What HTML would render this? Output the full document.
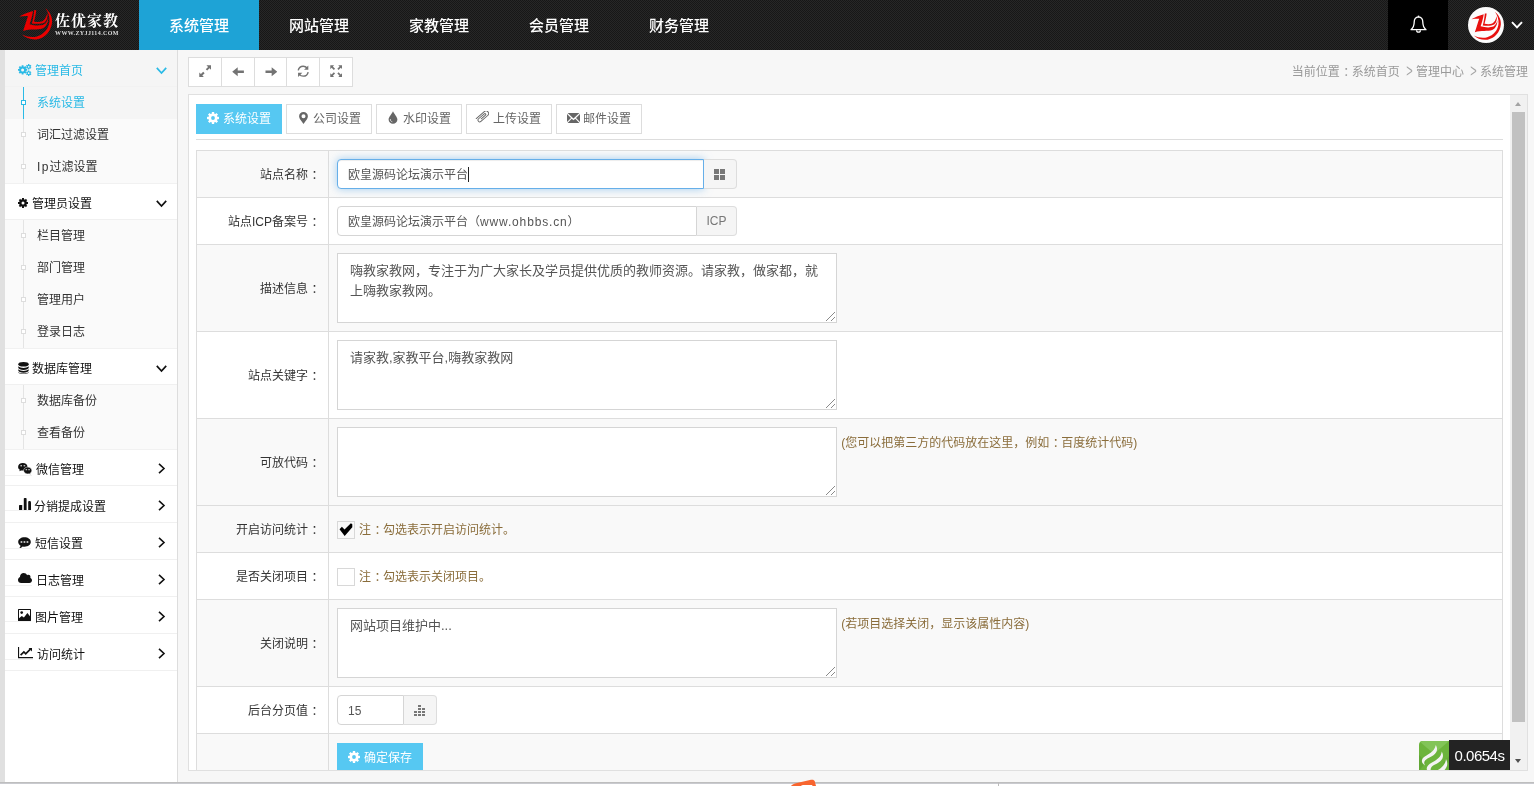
<!DOCTYPE html>
<html lang="zh-CN">
<head>
<meta charset="utf-8">
<title>佐优家教 - 系统管理</title>
<style>
*,*:before,*:after{box-sizing:border-box;margin:0;padding:0}
html,body{width:1534px;height:786px;overflow:hidden;background:#fff}
body{font-family:"Liberation Sans","Noto Sans CJK SC",sans-serif;font-size:12px;color:#333;position:relative}
a{text-decoration:none;color:inherit}
ul{list-style:none}
svg{display:block}
.gt{display:inline-block;position:relative;left:2px;transform:scale(.92,1.5);transform-origin:50% 62%;font-weight:400;color:#a4a4a4}
.c{position:relative;left:3.5px}
/* header */
#hd{will-change:transform;position:absolute;left:0;top:0;width:1534px;height:50px;background:#1e1e1e conic-gradient(#272727 25%,#171717 0 50%,#272727 0 75%,#171717 0) 0 0/2px 2px}
#logo{position:absolute;left:19px;top:8px;width:104px;height:34px}
#logo svg{position:absolute;left:-4.3px;top:-4.2px}
#logo b{position:absolute;left:36px;top:3px;font-family:"Liberation Serif","Noto Serif CJK SC",serif;font-weight:700;font-size:15px;line-height:20px;color:#fff;white-space:nowrap;letter-spacing:1px}
#logo i{position:absolute;left:36px;top:22px;font-family:"Liberation Serif",serif;font-style:normal;font-weight:700;font-size:6px;line-height:7px;color:#ddd;white-space:nowrap;letter-spacing:.38px}
#nav{position:absolute;left:139px;top:0;height:50px;display:flex}
#nav a{display:block;width:120px;height:50px;line-height:52px;text-align:center;color:#fff;font-size:15px;font-weight:500}
#nav a.on{background:#1ea3d6}
#bell{position:absolute;left:1388px;top:0;width:60px;height:50px;background:#000}
#bell svg{position:absolute;left:22px;top:15px}
#avatar{position:absolute;left:1468px;top:7px;width:36px;height:36px;border-radius:50%;background:#fcfcfc;overflow:hidden}
#avatar svg{position:absolute;left:-1.500px;top:.5px}
#uchev{position:absolute;left:1511px;top:21px}
/* left strip + sidebar */
#strip{position:absolute;left:0;top:50px;width:5px;height:732px;background:#e0e0e0}
#side{will-change:transform;position:absolute;left:5px;top:50px;width:173px;height:732px;background:#fff;border-right:1px solid #ddd}
#side .h{position:relative;display:block;height:37px;line-height:43px;border-bottom:1px solid #f0f0f0;font-size:12px;color:#111;white-space:nowrap}
#side .h .ic{position:absolute;left:13px;top:14px}
#side .h .tx{position:absolute;left:30px;top:0}
#side .h .ch{position:absolute;left:150.500px;top:16.500px}
#side .h .cr{position:absolute;left:153px;top:14px}
#side .h.on{background:#f5f5f5;color:#2abae6;border-bottom-color:#f2f2f2}
#side .sub{position:relative;background:#fafafa}
#side .sub+.h{box-shadow:inset 0 1px 0 #f1f1f1}
#side .h u{position:absolute;left:0;height:1px;background:#f1f1f1}
#side .sub:before{content:"";position:absolute;left:18px;top:0;bottom:0;width:1px;background:#e4e4e4}
#side .sub li{position:relative;height:32px;line-height:33px;padding-left:32px;color:#333}
#side .sub li:before{content:"";position:absolute;left:16px;top:13px;width:5px;height:5px;border:1px solid #ddd;background:#fff}
#side .sub li.on{background:#f5f5f5;color:#2abae6}
#side .sub li.on:before{border-color:#2abae6;z-index:1}
#side .sub li.on:after{content:"";position:absolute;left:18px;top:0;bottom:0;width:1px;background:#2abae6}
/* main */
#main{will-change:transform;position:absolute;left:178px;top:50px;width:1356px;height:732px;background:#f7f7f7}
#tb{position:absolute;left:10px;top:7px;width:165px;height:30px;border:1px solid #ddd;background:#fff}
#tb i{position:absolute;top:0;width:1px;height:28px;background:#ddd}
#tb svg{position:absolute}
#bc{word-spacing:1.2px;position:absolute;right:6px;top:13px;height:18px;line-height:18px;font-size:12px;color:#999;white-space:nowrap}
#fr{position:absolute;left:10px;top:44px;width:1340px;height:677px;background:#fff;border:1px solid #e0e0e0;overflow:hidden}
/* iframe content coordinates: origin = (189,95) */
#tabs{position:absolute;left:7px;top:9px;height:30px;display:flex}
#tabs a{position:relative;display:block;height:30px;line-height:28px;border:1px solid #ddd;background:#fff;color:#666;width:86px;margin-right:4px;padding-left:26px;font-size:12px;white-space:nowrap}
#tabs a.on{background:#56c8f2;border-color:#56c8f2;color:#fff}
#tabs a svg{position:absolute}
#hr{position:absolute;left:7px;top:44px;width:1307px;height:1px;background:#ddd}
table{position:absolute;left:7px;top:55px;width:1307px;border-collapse:collapse;table-layout:fixed}
td{border:1px solid #ddd;padding:8px;vertical-align:middle;font-size:12px;line-height:18px}
tr.g td{background:#f9f9f9}
td.l{width:132px;text-align:right;padding-right:8px;padding-top:10px;color:#333;white-space:nowrap}
.ig{display:flex;height:30px}
.inp{display:block;height:30px;border:1px solid #d5d5d5;border-radius:4px 0 0 4px;background:#fff;padding:0 10px;line-height:30px;font-size:12px;color:#555;white-space:nowrap;overflow:hidden}
.inp.f{border-color:#66afe9;box-shadow:inset 0 1px 1px rgba(0,0,0,.075),0 0 8px rgba(102,175,233,.6)}
.caret{display:inline-block;width:1px;height:15px;background:#222;vertical-align:-3px}
.add{position:relative;display:block;height:30px;border:1px solid #ddd;border-left:0;border-radius:0 4px 4px 0;background:#f5f5f5;color:#777;text-align:center;line-height:28px;font-size:12px}
.add svg{position:absolute}
.ta{position:relative;display:inline-block;vertical-align:top;width:500px;height:70px;border:1px solid #d5d5d5;background:#fff;padding:7px 12px 5px;font-size:13px;line-height:20px;color:#555}
.ta:after{content:"";position:absolute;right:1px;bottom:1px;width:9px;height:9px;background:linear-gradient(135deg,transparent 0,transparent 47%,#8a8a8a 47%,#8a8a8a 54%,transparent 54%,transparent 73%,#8a8a8a 73%,#8a8a8a 80%,transparent 80%)}
.note{color:#8a6d3b;font-size:12px}
.ta+.note{position:relative;top:7px;left:1px}
.cb+.note{position:relative;top:1px}
.cb{position:relative;top:.6px;display:inline-block;vertical-align:middle;width:18px;height:18px;border:1px solid #d8d8d8;margin-right:4px}
.cb svg{position:absolute;left:1px;top:1px}
.btn{display:block;position:relative;width:86px;height:30px;background:#56c8f2;color:#fff;line-height:30px;padding-left:27px;font-size:12px}
.btn svg{position:absolute;left:11px;top:8px}
/* scrollbar */
#sb{position:absolute;right:0;top:0;width:17px;height:675px;background:#f1f1f1}
#sb i{position:absolute;left:2px;top:17px;width:13px;height:610px;background:#c1c1c1}
#sb b{position:absolute;left:5px;width:0;height:0;border:3.5px solid transparent}
#sb b.u{top:7px;border-bottom:4px solid #a3a3a3;border-top:0}
#sb b.d{bottom:7px;border-top:4px solid #505050;border-bottom:0}
#trace{position:absolute;left:1230px;top:645px;width:91px;height:30px}
#trace .g{position:absolute;left:0;top:1px;width:30px;height:29px;border-radius:4px 0 0 0;overflow:hidden}
#trace .t{position:absolute;left:30px;top:0;width:61px;height:30px;background:#232323;color:#fff;font-size:15px;line-height:31px;text-align:center;letter-spacing:-.5px}
#foot{position:absolute;left:0;top:782px;width:1534px;height:4px;background:#fff;border-top:1px solid #bebebe}
#foot:before{content:"";position:absolute;left:0;top:0;width:100%;height:1px;background:#c9cacf}
#ft1{position:absolute;left:791px;top:779px;width:26px;height:7px;overflow:hidden}
#ft2{position:absolute;left:816px;top:782px;width:183px;height:4px;border-right:1px solid #bbb;background:transparent}
</style>
</head>
<body>
<div id="hd">
  <div id="logo"><svg width="40" height="40" viewBox="0 0 786 786"><path fill="#e80000" d="M85,245 C170,200 270,160 355,138 C340,230 315,320 287,398 C380,428 500,432 565,405 C615,375 640,325 652,268 C656,360 615,445 540,482 C440,520 300,480 160,530 C190,440 225,330 255,237 C200,235 140,240 85,245Z"/><path fill="#e80000" d="M378,118 L418,122 C408,200 392,280 372,343 C430,358 495,358 540,338 C590,308 620,250 636,178 C650,240 632,318 582,362 C520,396 420,392 332,382 C356,300 370,210 378,118Z"/><path fill="#e80000" d="M598,82 C680,150 738,250 728,362 C712,522 600,662 440,692 C320,707 208,672 138,600 C230,648 340,662 430,638 C570,598 668,480 678,340 C684,250 655,160 598,82Z"/></svg><b>佐优家教</b><i>WWW.ZYJJ114.COM</i></div>
  <div id="nav"><a class="on">系统管理</a><a>网站管理</a><a>家教管理</a><a>会员管理</a><a>财务管理</a></div>
  <div id="bell"><svg width="17" height="18" viewBox="0 0 17 18"><path fill="none" stroke="#fff" stroke-width="1.3" stroke-linejoin="round" d="M8.5,1.8 C5.6,2.1 4.2,4.4 4.2,7 C4.2,10.6 3,13 1,14.7 H16 C14,13 12.8,10.6 12.8,7 C12.8,4.4 11.4,2.1 8.5,1.8Z"/><path fill="#fff" d="M7.8,0.6 H9.2 V2.2 H7.8Z"/><path fill="none" stroke="#fff" stroke-width="1.2" d="M6.6,15.2 C6.6,16.4 7.4,17.2 8.5,17.2 S10.4,16.4 10.4,15.2"/></svg></div>
  <div id="avatar"><svg width="37" height="36" viewBox="0 0 786 786"><path fill="#e8110f" d="M85,245 C170,200 270,160 355,138 C340,230 315,320 287,398 C380,428 500,432 565,405 C615,375 640,325 652,268 C656,360 615,445 540,482 C440,520 300,480 160,530 C190,440 225,330 255,237 C200,235 140,240 85,245Z"/><path fill="#e8110f" d="M378,118 L418,122 C408,200 392,280 372,343 C430,358 495,358 540,338 C590,308 620,250 636,178 C650,240 632,318 582,362 C520,396 420,392 332,382 C356,300 370,210 378,118Z"/><path fill="#e8110f" d="M598,82 C680,150 738,250 728,362 C712,522 600,662 440,692 C320,707 208,672 138,600 C230,648 340,662 430,638 C570,598 668,480 678,340 C684,250 655,160 598,82Z"/></svg></div>
  <div id="uchev"><svg width="12" height="8" viewBox="0 0 12 8"><path d="M1,1.2 L6,6.4 L11,1.2" fill="none" stroke="#fff" stroke-width="1.9"/></svg></div>
</div>
<div id="strip"></div>
<div id="side">
  <a class="h on"><span class="ic"><svg width="14" height="12" viewBox="0 0 14 12"><path fill="currentColor" fill-rule="evenodd" d="M3.76,2.40 L3.66,1.29 L5.54,1.29 L5.44,2.40 L6.48,2.83 L7.20,1.98 L8.52,3.30 L7.67,4.02 L8.10,5.06 L9.21,4.96 L9.21,6.84 L8.10,6.74 L7.67,7.78 L8.52,8.50 L7.20,9.82 L6.48,8.97 L5.44,9.40 L5.54,10.51 L3.66,10.51 L3.76,9.40 L2.72,8.97 L2.00,9.82 L0.68,8.50 L1.53,7.78 L1.10,6.74 L-0.01,6.84 L-0.01,4.96 L1.10,5.06 L1.53,4.02 L0.68,3.30 L2.00,1.98 L2.72,2.83Z M3.10,5.90 a1.50,1.50 0 1,0 3.00,0 a1.50,1.50 0 1,0 -3.00,0Z"/><path fill="currentColor" fill-rule="evenodd" d="M10.08,0.90 L9.96,0.10 L11.44,0.10 L11.32,0.90 L12.04,1.31 L12.67,0.81 L13.41,2.09 L12.66,2.38 L12.66,3.22 L13.41,3.51 L12.67,4.79 L12.04,4.29 L11.32,4.70 L11.44,5.50 L9.96,5.50 L10.08,4.70 L9.36,4.29 L8.73,4.79 L7.99,3.51 L8.74,3.22 L8.74,2.38 L7.99,2.09 L8.73,0.81 L9.36,1.31Z M9.85,2.80 a0.85,0.85 0 1,0 1.70,0 a0.85,0.85 0 1,0 -1.70,0Z"/><path fill="currentColor" fill-rule="evenodd" d="M10.08,7.30 L9.96,6.50 L11.44,6.50 L11.32,7.30 L12.04,7.71 L12.67,7.21 L13.41,8.49 L12.66,8.78 L12.66,9.62 L13.41,9.91 L12.67,11.19 L12.04,10.69 L11.32,11.10 L11.44,11.90 L9.96,11.90 L10.08,11.10 L9.36,10.69 L8.73,11.19 L7.99,9.91 L8.74,9.62 L8.74,8.78 L7.99,8.49 L8.73,7.21 L9.36,7.71Z M9.85,9.20 a0.85,0.85 0 1,0 1.70,0 a0.85,0.85 0 1,0 -1.70,0Z"/></svg></span><span class="tx" style="left:30px">管理首页</span><span class="ch"><svg width="11" height="8" viewBox="0 0 11 8"><path d="M0.800,0.900 L5.500,6 L10.200,0.900" fill="none" stroke="currentColor" stroke-width="1.700"/></svg></span></a>
  <ul class="sub"><li class="on">系统设置</li><li>词汇过滤设置</li><li><span style="letter-spacing:1.3px">Ip</span>过滤设置</li></ul>
  <a class="h"><span class="ic" style="top:15px"><svg width="10" height="10" viewBox="0 0 10 10"><path fill="currentColor" fill-rule="evenodd" d="M4.08,1.16 L3.99,0.00 L6.01,0.00 L5.92,1.16 L7.06,1.63 L7.82,0.75 L9.25,2.18 L8.37,2.94 L8.84,4.08 L10.00,3.99 L10.00,6.01 L8.84,5.92 L8.37,7.06 L9.25,7.82 L7.82,9.25 L7.06,8.37 L5.92,8.84 L6.01,10.00 L3.99,10.00 L4.08,8.84 L2.94,8.37 L2.18,9.25 L0.75,7.82 L1.63,7.06 L1.16,5.92 L0.00,6.01 L0.00,3.99 L1.16,4.08 L1.63,2.94 L0.75,2.18 L2.18,0.75 L2.94,1.63Z M3.50,5.00 a1.50,1.50 0 1,0 3.00,0 a1.50,1.50 0 1,0 -3.00,0Z"/></svg></span><span class="tx" style="left:27px">管理员设置</span><span class="ch"><svg width="11" height="8" viewBox="0 0 11 8"><path d="M0.800,0.900 L5.500,6 L10.200,0.900" fill="none" stroke="currentColor" stroke-width="1.700"/></svg></span></a>
  <ul class="sub"><li>栏目管理</li><li>部门管理</li><li>管理用户</li><li>登录日志</li></ul>
  <a class="h"><span class="ic"><svg width="11" height="12" viewBox="0 0 11 12"><g fill="currentColor"><ellipse cx="5.5" cy="2.3" rx="5.2" ry="2.3"/><path d="M0.3,4.3 C1.5,5.5 3.5,5.9 5.5,5.9 S9.5,5.5 10.7,4.3 V5.8 C10.7,7 8.4,7.9 5.5,7.9 S0.3,7 0.3,5.8Z"/><path d="M0.3,7.3 C1.5,8.5 3.5,8.9 5.5,8.9 S9.5,8.5 10.7,7.3 V8.6 C10.7,9.8 8.4,10.7 5.5,10.7 S0.3,9.8 0.3,8.6Z"/><path d="M0.3,9.9 C1.5,11 3.5,11.4 5.5,11.4 S9.5,11 10.7,9.9 V10.2 C10.7,11.3 8.4,12 5.5,12 S0.3,11.3 0.3,10.2Z"/></g></svg></span><span class="tx" style="left:27px">数据库管理</span><span class="ch"><svg width="11" height="8" viewBox="0 0 11 8"><path d="M0.800,0.900 L5.500,6 L10.200,0.900" fill="none" stroke="currentColor" stroke-width="1.700"/></svg></span></a>
  <ul class="sub"><li>数据库备份</li><li>查看备份</li></ul>
  <a class="h"><span class="ic"><svg width="14" height="12" viewBox="0 0 14 12"><g fill="currentColor"><path d="M4.8,0.1 C2.1,0.1 0.1,1.8 0.1,3.9 C0.1,5.1 0.8,6.1 1.8,6.8 L1.3,8.3 L3.1,7.4 C3.6,7.5 4.2,7.6 4.8,7.6 C7.5,7.6 9.5,6 9.5,3.9 S7.5,0.1 4.8,0.1Z"/><path stroke="#fff" stroke-width="0.5" d="M9.7,4.1 C7.4,4.1 5.6,5.6 5.6,7.5 S7.4,10.9 9.7,10.9 C10.2,10.9 10.7,10.8 11.1,10.7 L12.6,11.5 L12.2,10.2 C13.2,9.6 13.8,8.6 13.8,7.5 C13.8,5.6 12,4.1 9.7,4.1Z"/></g><g fill="#fff"><rect x="2.4" y="2.3" width="1.6" height="1"/><rect x="5.6" y="2.3" width="1.6" height="1"/><rect x="7.6" y="6.3" width="1.5" height="0.9"/><rect x="10.3" y="6.3" width="1.5" height="0.9"/></g></svg></span><span class="tx" style="left:31px">微信管理</span><u style="top:26px;width:27px"></u><span class="cr"><svg width="8" height="11" viewBox="0 0 8 11"><path d="M1,0.800 L6,5.500 L1,10.200" fill="none" stroke="currentColor" stroke-width="1.600"/></svg></span></a>
  <a class="h"><span class="ic" style="left:14px;top:12px"><svg width="12" height="12" viewBox="0 0 12 12"><g fill="currentColor"><path d="M0,12 V7.6 Q0,7 0.6,7 H2.6 Q3.2,7 3.2,7.6 V12Z"/><path d="M4.8,12 V0.8 Q4.8,0 5.6,0 H6.8 Q7.6,0 7.6,0.8 V12Z"/><path d="M9.2,12 V4 Q9.2,3 10.2,3 H11 Q12,3.4 12,4.4 V12Z"/></g></svg></span><span class="tx" style="left:29px">分销提成设置</span><u style="top:24px;width:26px"></u><span class="cr"><svg width="8" height="11" viewBox="0 0 8 11"><path d="M1,0.800 L6,5.500 L1,10.200" fill="none" stroke="currentColor" stroke-width="1.600"/></svg></span></a>
  <a class="h"><span class="ic" style="top:13.5px"><svg width="13" height="12" viewBox="0 0 13 12"><path fill="currentColor" d="M6.5,0.3 C2.9,0.3 0.2,2.4 0.2,5 C0.2,6.5 1.1,7.8 2.6,8.7 C2.3,9.7 1.7,10.6 0.9,11.4 C2.4,11.2 3.7,10.5 4.6,9.5 C5.2,9.6 5.8,9.7 6.5,9.7 C10.1,9.7 12.8,7.6 12.8,5 S10.1,0.3 6.5,0.3Z"/><g fill="#fff"><rect x="2.6" y="4.3" width="1.7" height="1.4"/><rect x="5.6" y="4.3" width="1.7" height="1.4"/><rect x="8.6" y="4.3" width="1.7" height="1.4"/></g></svg></span><span class="tx" style="left:30px">短信设置</span><u style="top:25px;width:26px"></u><span class="cr"><svg width="8" height="11" viewBox="0 0 8 11"><path d="M1,0.800 L6,5.500 L1,10.200" fill="none" stroke="currentColor" stroke-width="1.600"/></svg></span></a>
  <a class="h"><span class="ic" style="top:13px"><svg width="14" height="10" viewBox="0 0 14 10"><path fill="currentColor" d="M3.1,10 C1.4,10 0,8.6 0,6.9 C0,5.6 0.8,4.5 2,4 C2,3.9 2,3.8 2,3.7 C2,1.7 3.7,0 5.7,0 C7.2,0 8.5,0.9 9.1,2.2 C9.5,1.9 9.9,1.8 10.4,1.8 C11.6,1.8 12.5,2.7 12.5,3.9 C12.5,4.2 12.4,4.6 12.3,4.9 C13.3,5.2 14,6.2 14,7.3 C14,8.8 12.8,10 11.3,10Z"/></svg></span><span class="tx" style="left:31px">日志管理</span><u style="top:25px;width:27px"></u><span class="cr"><svg width="8" height="11" viewBox="0 0 8 11"><path d="M1,0.800 L6,5.500 L1,10.200" fill="none" stroke="currentColor" stroke-width="1.600"/></svg></span></a>
  <a class="h"><span class="ic" style="top:12px"><svg width="13" height="12" viewBox="0 0 13 12"><path fill="currentColor" fill-rule="evenodd" d="M0,0.6 Q0,0 0.6,0 H12.4 Q13,0 13,0.6 V11.4 Q13,12 12.4,12 H0.6 Q0,12 0,11.4Z M1,1 V11 H12 V1Z"/><path fill="currentColor" d="M1,11 V9.2 L3.8,7.1 L5.9,8.6 L9.4,4 L12,7.3 V11Z"/><circle fill="currentColor" cx="3.7" cy="3.6" r="1.35"/></svg></span><span class="tx" style="left:30px">图片管理</span><u style="top:24px;width:26px"></u><span class="cr"><svg width="8" height="11" viewBox="0 0 8 11"><path d="M1,0.800 L6,5.500 L1,10.200" fill="none" stroke="currentColor" stroke-width="1.600"/></svg></span></a>
  <a class="h"><span class="ic" style="top:13px"><svg width="15" height="12" viewBox="0 0 15 12"><path fill="currentColor" d="M0,0 H1.1 V10.1 H15 V11.2 H0Z"/><path fill="none" stroke="currentColor" stroke-width="1.7" stroke-linejoin="miter" d="M2.6,8.2 L5.9,5 L7.7,6.8 L12.4,2.2"/><path fill="currentColor" d="M10.6,1.1 H14 V4.6Z"/></svg></span><span class="tx" style="left:32px">访问统计</span><u style="top:25px;width:28px"></u><span class="cr"><svg width="8" height="11" viewBox="0 0 8 11"><path d="M1,0.800 L6,5.500 L1,10.200" fill="none" stroke="currentColor" stroke-width="1.600"/></svg></span></a>
</div>
<div id="main">
  <div id="tb">
    <i style="left:32px"></i><i style="left:65px"></i><i style="left:97px"></i><i style="left:130px"></i>
    <span style="position:absolute;left:10px;top:7px"><svg width="12.4" height="12.4" viewBox="0 0 13 13"><g fill="#737373"><path d="M7.8,0.3 H12.7 V5.2 L11,3.5 L8.6,5.9 L7.1,4.4 L9.5,2Z"/><path d="M5.2,12.7 H0.3 V7.8 L2,9.5 L4.4,7.1 L5.9,8.6 L3.5,11Z"/></g></svg></span>
    <span style="position:absolute;left:43px;top:9px"><svg width="12.4" height="9.5" viewBox="0 0 13 10"><path fill="#737373" d="M0.2,5 L6,0.2 V3.7 H12.5 V6.3 H6 V9.8Z"/></svg></span>
    <span style="position:absolute;left:76px;top:9px"><svg width="12.4" height="9.5" viewBox="0 0 13 10"><path fill="#737373" d="M12.8,5 L7,0.2 V3.7 H0.5 V6.3 H7 V9.8Z"/></svg></span>
    <span style="position:absolute;left:108px;top:7px"><svg width="12.4" height="12.4" viewBox="0 0 13 13"><g fill="none" stroke="#737373" stroke-width="1.5"><path d="M1.3,5.6 C1.8,3.1 4,1.3 6.5,1.3 C8.2,1.3 9.6,2 10.6,3.2"/><path d="M11.7,7.4 C11.2,9.9 9,11.7 6.5,11.7 C4.8,11.7 3.4,11 2.4,9.8"/></g><g fill="#737373"><path d="M11.9,0.4 V4.9 H7.4Z"/><path d="M1.1,12.6 V8.1 H5.6Z"/></g></svg></span>
    <span style="position:absolute;left:141px;top:7px"><svg width="12.4" height="12.4" viewBox="0 0 13 13"><g fill="#737373"><path d="M0.3,0.3 H4.4 L3,1.7 L5.3,4 L4,5.3 L1.7,3 L0.3,4.4Z"/><path d="M12.7,0.3 V4.4 L11.3,3 L9,5.3 L7.7,4 L10,1.7 L8.6,0.3Z"/><path d="M0.3,12.7 V8.6 L1.7,10 L4,7.7 L5.3,9 L3,11.3 L4.4,12.7Z"/><path d="M12.7,12.7 H8.6 L10,11.3 L7.7,9 L9,7.7 L11.3,10 L12.7,8.6Z"/></g></svg></span>
  </div>
  <div id="bc">当前位置<span class="c">：</span>系统首页 <span class="gt">&gt;</span> 管理中心 <span class="gt">&gt;</span> 系统管理</div>
  <div id="fr">
    <div id="tabs">
      <a class="on"><span style="position:absolute;left:10px;top:7px"><svg width="12" height="12" viewBox="0 0 12 12"><path fill="currentColor" fill-rule="evenodd" d="M4.90,1.43 L4.79,0.02 L7.21,0.02 L7.10,1.43 L8.46,1.99 L9.37,0.91 L11.09,2.63 L10.01,3.54 L10.57,4.90 L11.98,4.79 L11.98,7.21 L10.57,7.10 L10.01,8.46 L11.09,9.37 L9.37,11.09 L8.46,10.01 L7.10,10.57 L7.21,11.98 L4.79,11.98 L4.90,10.57 L3.54,10.01 L2.63,11.09 L0.91,9.37 L1.99,8.46 L1.43,7.10 L0.02,7.21 L0.02,4.79 L1.43,4.90 L1.99,3.54 L0.91,2.63 L2.63,0.91 L3.54,1.99Z M4.10,6.00 a1.90,1.90 0 1,0 3.80,0 a1.90,1.90 0 1,0 -3.80,0Z"/></svg></span>系统设置</a>
      <a><span style="position:absolute;left:12px;top:7px"><svg width="9" height="12" viewBox="0 0 9 12"><path fill="currentColor" fill-rule="evenodd" d="M4.5,0 C2,0 0.1,1.9 0.1,4.3 C0.1,5.3 0.4,6 0.9,6.9 L4.5,12 L8.1,6.9 C8.6,6 8.9,5.3 8.9,4.3 C8.9,1.9 7,0 4.5,0Z M4.5,2.3 A2,2 0 1,0 4.5,6.3 A2,2 0 1,0 4.5,2.3Z"/></svg></span>公司设置</a>
      <a><span style="position:absolute;left:11px;top:6px"><svg width="10" height="13" viewBox="0 0 10 13"><path fill="currentColor" d="M5,0.2 C5.6,2.4 9.4,5.6 9.4,8.6 C9.4,11 7.4,12.8 5,12.8 S0.6,11 0.6,8.6 C0.6,5.6 4.4,2.4 5,0.2Z"/><path fill="none" stroke="#fff" stroke-opacity=".75" stroke-width="0.9" d="M2.4,8 C2.2,9.6 3,10.6 4.3,10.8"/></svg></span>水印设置</a>
      <a><span style="position:absolute;left:8.4px;top:6.4px"><svg width="14" height="12" viewBox="0 0 14 12"><g transform="translate(7,6) rotate(-41) translate(-8,-3.100)"><path fill="none" stroke="currentColor" stroke-width="0.950" stroke-linecap="round" d="M2.600,0.500 H13.300 A2.600,2.600 0 0 1 13.300,5.700 H4.300 A1.750,1.750 0 0 1 4.300,2.200 H11.800 A0.900,0.900 0 0 1 11.800,4 H6.200"/></g></svg></span>上传设置</a>
      <a><span style="position:absolute;left:10px;top:8px"><svg width="13" height="10" viewBox="0 0 13 10"><g fill="currentColor"><path d="M0.6,0 H12.4 L6.5,5.6Z"/><path d="M0,0.9 L4,5 L0,9.100Z"/><path d="M13,0.9 L9,5 L13,9.100Z"/><path d="M0.6,10 L4.700,5.700 L6.500,7.300 L8.300,5.700 L12.400,10Z"/></g></svg></span>邮件设置</a>
    </div>
    <div id="hr"></div>
    <table>
      <tr class="g"><td class="l">站点名称<span class="c">：</span></td><td><div class="ig"><span class="inp f" style="width:367px">欧皇源码论坛演示平台<span class="caret"></span></span><span class="add" style="width:33px"><span style="position:absolute;left:10px;top:9px"><svg width="11" height="11" viewBox="0 0 11 11"><g fill="#777"><rect x="0" y="0" width="5" height="5"/><rect x="6" y="0" width="5" height="5"/><rect x="0" y="6" width="5" height="5"/><rect x="6" y="6" width="5" height="5"/></g></svg></span></span></div></td></tr>
      <tr><td class="l">站点ICP备案号<span class="c">：</span></td><td><div class="ig"><span class="inp" style="width:360px">欧皇源码论坛演示平台（<span style="letter-spacing:.85px">www.ohbbs.cn</span>）</span><span class="add" style="width:40px">ICP</span></div></td></tr>
      <tr class="g"><td class="l">描述信息<span class="c">：</span></td><td><div class="ta">嗨教家教网，专注于为广大家长及学员提供优质的教师资源。请家教，做家都，就上嗨教家教网。</div></td></tr>
      <tr><td class="l">站点关键字<span class="c">：</span></td><td><div class="ta">请家教,家教平台,嗨教家教网</div></td></tr>
      <tr class="g"><td class="l">可放代码<span class="c">：</span></td><td><div class="ta"></div> <span class="note">(您可以把第三方的代码放在这里，例如<span class="c">：</span>百度统计代码)</span></td></tr>
      <tr class="g"><td class="l">开启访问统计<span class="c">：</span></td><td style="height:47px"><span class="cb"><svg width="14" height="13" viewBox="0 0 14 13"><path fill="#000" d="M0.500,6.300 L2.900,3.700 L5.500,6.600 L11.900,0.300 L13.300,1.300 L13.300,4.300 L5.700,12.900Z"/></svg></span><span class="note">注<span class="c">：</span>勾选表示开启访问统计。</span></td></tr>
      <tr><td class="l">是否关闭项目<span class="c">：</span></td><td style="height:47px"><span class="cb"></span><span class="note">注<span class="c">：</span>勾选表示关闭项目。</span></td></tr>
      <tr class="g"><td class="l">关闭说明<span class="c">：</span></td><td><div class="ta">网站项目维护中...</div> <span class="note">(若项目选择关闭，显示该属性内容)</span></td></tr>
      <tr><td class="l">后台分页值<span class="c">：</span></td><td><div class="ig"><span class="inp" style="width:67px">15</span><span class="add" style="width:33px"><span style="position:absolute;left:10px;top:9px"><svg width="11" height="11" viewBox="0 0 11 11"><g fill="#777"><rect x="0" y="9" width="3" height="2"/><rect x="0" y="6" width="3" height="2"/><rect x="4" y="9" width="3" height="2"/><rect x="4" y="6" width="3" height="2"/><rect x="4" y="3" width="3" height="2"/><rect x="4" y="0" width="3" height="2"/><rect x="8" y="9" width="3" height="2"/><rect x="8" y="6" width="3" height="2"/><rect x="8" y="3" width="3" height="2"/></g></svg></span></span></div></td></tr>
      <tr class="g"><td class="l" style="height:47px"></td><td style="vertical-align:top;padding-top:9px"><a class="btn"><svg width="12" height="12" viewBox="0 0 12 12"><path fill="currentColor" fill-rule="evenodd" d="M4.90,1.43 L4.79,0.02 L7.21,0.02 L7.10,1.43 L8.46,1.99 L9.37,0.91 L11.09,2.63 L10.01,3.54 L10.57,4.90 L11.98,4.79 L11.98,7.21 L10.57,7.10 L10.01,8.46 L11.09,9.37 L9.37,11.09 L8.46,10.01 L7.10,10.57 L7.21,11.98 L4.79,11.98 L4.90,10.57 L3.54,10.01 L2.63,11.09 L0.91,9.37 L1.99,8.46 L1.43,7.10 L0.02,7.21 L0.02,4.79 L1.43,4.90 L1.99,3.54 L0.91,2.63 L2.63,0.91 L3.54,1.99Z M4.10,6.00 a1.90,1.90 0 1,0 3.80,0 a1.90,1.90 0 1,0 -3.80,0Z"/></svg>确定保存</a></td></tr>
    </table>
    <div id="sb"><b class="u"></b><i></i><b class="d"></b></div>
    <div id="trace"><div class="g"><svg width="30" height="30" viewBox="0 0 30 30"><rect width="30" height="30" fill="#6cb43c"/><path fill="#82c458" d="M0,0 H30 L15,13Z"/><path fill="#5a9c30" d="M0,30 L7,21 L0,14Z" opacity=".55"/><path fill="#5a9c30" d="M30,30 L24,22 L30,15Z" opacity=".35"/><path fill="#f3f3f3" d="M16.800,4 C20,9.500 17,13.500 10,16.800 C5.500,19 4.200,21.500 6.200,24.600 C3,22.500 1.500,19.500 4.500,16.500 C7.500,13.600 15.500,11.500 16.800,4Z"/><path fill="#f3f3f3" d="M22.800,10.500 C26,16.500 22.500,20.500 16,23.600 C12.500,25.300 11,27.500 11.800,30 H8.500 C6.500,27 8.500,24 12.500,21.800 C17.500,19 22,16.500 22.800,10.500Z"/><path fill="#f3f3f3" d="M27,18 C29.600,23 28,27 24.500,30 H17 C21,28 26.500,24.500 27,18Z"/></svg></div><div class="t">0.0654s</div></div>
  </div>
</div>
<div id="foot"></div>
<div id="ft1"><svg width="26" height="7" viewBox="0 0 26 7"><path fill="#f8652f" d="M0,7 C1,5.400 3,4.800 6,4 L20,0.800 C22,0.400 23.300,1 23.800,2.500 L25,7Z"/><path fill="#fff" d="M10,7 C10.500,6.300 11.500,6 13,6 H21 L21.600,7Z"/></svg></div>
<div id="ft2"></div>
</body>
</html>
